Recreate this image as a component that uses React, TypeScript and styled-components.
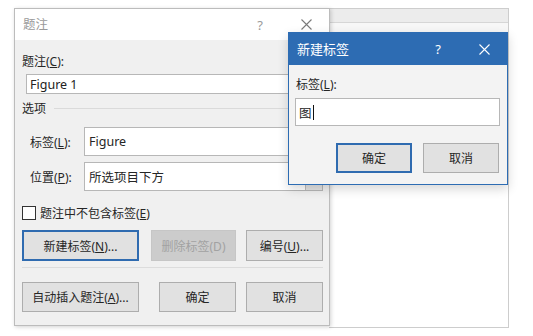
import React from "react";
import styled, { createGlobalStyle } from "styled-components";

const GlobalStyle = createGlobalStyle`
  body {
    margin: 0;
    background: #ffffff;
    font-family: "Noto Sans", "Noto Sans CJK SC", sans-serif;
    color: #262626;
  }
`;

const Desktop = styled.div`
  position: relative;
  width: 533px;
  height: 336px;
  overflow: hidden;
  background: #ffffff;
`;

// windows sit on a free canvas, so they are placed by coordinates
const BackWindow = styled.div`
  position: absolute;
  left: 329px;
  top: 8px;
  width: 179px;
  height: 318px;
  border: 1px solid #cdcdcd;
  border-left: none;
  background: #ffffff;
  display: flex;
  flex-direction: column;
`;

const BackStrip = styled.div`
  height: 13px;
  background: #ececec;
  border-bottom: 1px solid #d6d6d6;
`;

const BackRibbon = styled.div`
  height: 10px;
  background: #f7f7f7;
`;

const Window = styled.div<{ $left: number; $top: number; $w: number; $h: number; $accent?: boolean }>`
  position: absolute;
  left: ${(p) => p.$left}px;
  top: ${(p) => p.$top}px;
  width: ${(p) => p.$w}px;
  height: ${(p) => p.$h}px;
  box-sizing: border-box;
  border: 1px solid ${(p) => (p.$accent ? "#2d6cb3" : "#bcbcbc")};
  background: ${(p) => (p.$accent ? "#f3f3f3" : "#f0f0f0")};
  box-shadow: ${(p) => (p.$accent ? "0 4px 10px rgba(0,0,0,0.16)" : "1px 1px 4px rgba(0,0,0,0.18)")};
  display: flex;
  flex-direction: column;
`;

const TitleBar = styled.div<{ $accent?: boolean; $h: number }>`
  height: ${(p) => p.$h}px;
  flex-shrink: 0;
  display: flex;
  align-items: center;
  background: ${(p) => (p.$accent ? "#2d6cb3" : "#ffffff")};
  color: ${(p) => (p.$accent ? "#ffffff" : "#9a9a9a")};
`;

const Title = styled.div<{ $size: number }>`
  flex: 1;
  padding-left: 8px;
  font-size: ${(p) => p.$size}px;
  line-height: 16px;
`;

const TitleButton = styled.div`
  width: 46px;
  height: 100%;
  display: flex;
  align-items: center;
  justify-content: center;
  font-size: 13px;
`;

const CloseGlyph = ({ color }: { color: string }) => (
  <svg width="11" height="11" viewBox="0 0 11 11">
    <path d="M0.5 0.5 L10.5 10.5 M10.5 0.5 L0.5 10.5" stroke={color} strokeWidth="1.1" fill="none" />
  </svg>
);

const Body = styled.div<{ $pad: string }>`
  flex: 1;
  display: flex;
  flex-direction: column;
  padding: ${(p) => p.$pad};
  font-size: 12px;
`;

const FieldLabel = styled.div<{ $indent?: number }>`
  height: 16px;
  line-height: 16px;
  padding-left: ${(p) => p.$indent ?? 0}px;
`;

const TextBox = styled.div<{ $h: number; $mt: number; $ml?: number }>`
  height: ${(p) => p.$h}px;
  margin-top: ${(p) => p.$mt}px;
  margin-left: ${(p) => p.$ml ?? 0}px;
  box-sizing: border-box;
  border: 1px solid #b7b7b7;
  background: #ffffff;
  display: flex;
  align-items: center;
  padding-left: 3px;
  font-size: 12.5px;
  color: #222;
`;

const Caret = styled.span`
  display: inline-block;
  width: 1px;
  height: 15px;
  margin-left: 1px;
  background: #111;
`;

const GroupHeader = styled.div`
  margin-top: 6px;
  height: 16px;
  display: flex;
  align-items: center;
  gap: 8px;
  font-size: 12px;
`;

const Rule = styled.div`
  flex: 1;
  height: 1px;
  background: #dadada;
`;

const FormRow = styled.div<{ $mt: number }>`
  margin-top: ${(p) => p.$mt}px;
  height: 29px;
  display: flex;
  align-items: stretch;
`;

const RowLabel = styled.div`
  width: 54px;
  padding-left: 8px;
  display: flex;
  align-items: center;
`;

const Combo = styled.div`
  flex: 1;
  box-sizing: border-box;
  border: 1px solid #b7b7b7;
  background: #ffffff;
  display: flex;
  align-items: stretch;
`;

const ComboText = styled.div`
  flex: 1;
  display: flex;
  align-items: center;
  padding-left: 4px;
  font-size: 12.5px;
`;

const DropButton = styled.div`
  width: 16px;
  background: #e3e3e3;
  border-left: 1px solid #bdbdbd;
  display: flex;
  align-items: center;
  justify-content: center;
`;

const CheckRow = styled.div`
  margin-top: 14px;
  height: 16px;
  display: flex;
  align-items: center;
  gap: 4px;
`;

const CheckBox = styled.div`
  width: 12px;
  height: 12px;
  border: 1px solid #333;
  background: #ffffff;
`;

const ButtonRow = styled.div<{ $mt: number; $h: number; $pr?: number }>`
  margin-top: ${(p) => p.$mt}px;
  height: ${(p) => p.$h}px;
  display: flex;
  justify-content: flex-end;
  gap: 10px;
  padding-right: ${(p) => p.$pr ?? 0}px;
`;

const Button = styled.div<{ $w: number; $focused?: boolean; $disabled?: boolean; $lead?: boolean; $gap?: number }>`
  width: ${(p) => p.$w}px;
  box-sizing: border-box;
  margin-right: ${(p) => (p.$lead ? "auto" : "0")};
  margin-left: ${(p) => p.$gap ?? 0}px;
  display: flex;
  align-items: center;
  justify-content: center;
  font-size: 12px;
  background: ${(p) => (p.$disabled ? "#cccccc" : "#e1e1e1")};
  color: ${(p) => (p.$disabled ? "#a2a2a2" : "#262626")};
  border: 1px solid ${(p) => (p.$focused ? "#2f6bb0" : p.$disabled ? "#c6c6c6" : "#adadad")};
  box-shadow: ${(p) => (p.$focused ? "inset 0 0 0 1px #2f6bb0" : "none")};
`;

const Separator = styled.div`
  margin-top: 6px;
  height: 1px;
  background: #dcdcdc;
`;

const Chevron = () => (
  <svg width="8" height="5" viewBox="0 0 8 5">
    <path d="M0.5 0.5 L4 4 L7.5 0.5" stroke="#444" fill="none" />
  </svg>
);

export default function App() {
  return (
    <Desktop>
      <GlobalStyle />
      <BackWindow>
        <BackStrip />
        <BackRibbon />
      </BackWindow>

      <Window $left={14} $top={8} $w={316} $h={318}>
        <TitleBar $h={31}>
          <Title $size={12.5}>题注</Title>
          <TitleButton>?</TitleButton>
          <TitleButton>
            <CloseGlyph color="#7a7a7a" />
          </TitleButton>
        </TitleBar>
        <Body $pad="14px 6px 0 7px">
          <FieldLabel>
            题注(<u>C</u>):
          </FieldLabel>
          <TextBox $h={20} $mt={4} $ml={4}>
            Figure 1
          </TextBox>
          <GroupHeader>
            选项
            <Rule />
          </GroupHeader>
          <FormRow $mt={11}>
            <RowLabel>
              <span>
                标签(<u>L</u>):
              </span>
            </RowLabel>
            <Combo>
              <ComboText>Figure</ComboText>
              <DropButton>
                <Chevron />
              </DropButton>
            </Combo>
          </FormRow>
          <FormRow $mt={6}>
            <RowLabel>
              <span>
                位置(<u>P</u>):
              </span>
            </RowLabel>
            <Combo>
              <ComboText>所选项目下方</ComboText>
              <DropButton>
                <Chevron />
              </DropButton>
            </Combo>
          </FormRow>
          <CheckRow>
            <CheckBox />
            <span>
              题注中不包含标签(<u>E</u>)
            </span>
          </CheckRow>
          <ButtonRow $mt={9} $h={31}>
            <Button $w={117} $focused $lead>
              <span>
                新建标签(<u>N</u>)...
              </span>
            </Button>
            <Button $w={85} $disabled>
              删除标签(D)
            </Button>
            <Button $w={77}>
              <span>
                编号(<u>U</u>)...
              </span>
            </Button>
          </ButtonRow>
          <Separator />
          <ButtonRow $mt={14} $h={30}>
            <Button $w={117} $lead>
              <span>
                自动插入题注(<u>A</u>)...
              </span>
            </Button>
            <Button $w={77}>确定</Button>
            <Button $w={77}>取消</Button>
          </ButtonRow>
        </Body>
      </Window>

      <Window $left={288} $top={32} $w={220} $h={153} $accent>
        <TitleBar $h={32} $accent>
          <Title $size={13}>新建标签</Title>
          <TitleButton>?</TitleButton>
          <TitleButton>
            <CloseGlyph color="#ffffff" />
          </TitleButton>
        </TitleBar>
        <Body $pad="12px 7px 0 6px">
          <FieldLabel $indent={1}>
            标签(<u>L</u>):
          </FieldLabel>
          <TextBox $h={28} $mt={5}>
            图<Caret />
          </TextBox>
          <ButtonRow $mt={17} $h={30} $pr={1}>
            <Button $w={76} $focused>
              确定
            </Button>
            <Button $w={76} $gap={1}>
              取消
            </Button>
          </ButtonRow>
        </Body>
      </Window>
    </Desktop>
  );
}
